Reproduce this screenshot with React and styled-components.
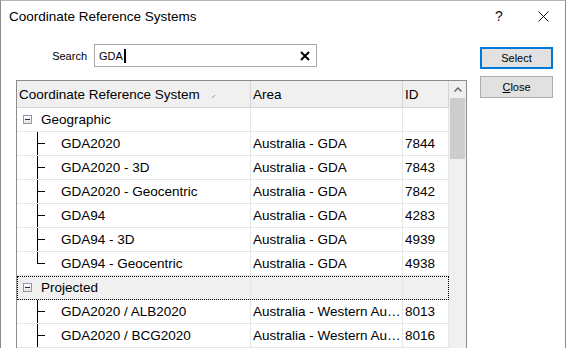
import React from 'react';
import styled, { createGlobalStyle } from 'styled-components';

const Global = createGlobalStyle`
  html, body { margin: 0; padding: 0; background: #fff; overflow: hidden; }
  body { font-family: "Liberation Sans", Arial, sans-serif; color: #000; }
  * { box-sizing: border-box; }
`;

const Window = styled.div`
  width: 566px;
  height: 372px;
  border: 1px solid #8a8a8a;
  border-top-color: #b4b4b4;
  border-bottom: none;
  background: #fff;
  display: flex;
  flex-direction: column;
`;

const TitleBar = styled.div`
  height: 30px;
  flex: none;
  display: flex;
  align-items: center;
  padding-left: 8px;
`;

const Title = styled.div`
  flex: 1;
  font-size: 13.5px;
  color: #000;
`;

const CaptionButton = styled.div`
  width: 44px;
  height: 30px;
  display: flex;
  align-items: center;
  justify-content: center;
  font-size: 14px;
  color: #111;
`;

const Body = styled.div`
  flex: 1;
  display: flex;
  padding: 13px 0 0 15px;
  min-height: 0;
`;

const MainColumn = styled.div`
  width: 451px;
  display: flex;
  flex-direction: column;
  min-height: 0;
`;

const SearchRow = styled.div`
  height: 23px;
  display: flex;
  align-items: center;
`;

const SearchLabel = styled.label`
  width: 71px;
  margin-right: 7px;
  text-align: right;
  font-size: 11px;
  color: #000;
`;

const SearchBox = styled.div`
  width: 223px;
  height: 23px;
  border: 1px solid #a9a9a9;
  display: flex;
  align-items: center;
  padding: 0 6px 0 4px;
  font-size: 11px;
`;

const SearchText = styled.span`
  display: inline-flex;
  align-items: center;
  flex: 1;
`;

const Caret = styled.span`
  display: inline-block;
  width: 2px;
  height: 14px;
  background: #000;
  margin-left: 1px;
`;

const Frame = styled.div`
  margin-top: 13px;
  height: 300px;
  border: 1px solid #8c8c8c;
  display: flex;
  overflow: hidden;
`;

const Grid = styled.div`
  width: 432px;
  display: flex;
  flex-direction: column;
`;

const HeaderRow = styled.div`
  display: grid;
  grid-template-columns: 234px 152px 46px;
  height: 27px;
  background: #f0f0f0;
  border-bottom: 1px solid #d5d5d5;
`;

const HeaderCell = styled.div`
  display: flex;
  align-items: center;
  padding-left: 2px;
  border-right: 1px solid #d5d5d5;
  font-size: 13.5px;
  white-space: nowrap;
`;

const SortMark = styled.svg`
  margin-left: auto;
  margin-right: 35px;
  margin-top: 5px;
`;

const Row = styled.div`
  position: relative;
  display: grid;
  grid-template-columns: 234px 152px 46px;
  height: 24px;
  border-bottom: 1px solid #e6e6e6;
  background: ${p => (p.$focused ? '#f0f0f0' : '#fff')};
`;

const FocusRing = styled.div`
  position: absolute;
  left: 0;
  right: 0;
  top: 0;
  bottom: -1px;
  border: 1px dotted #000;
  pointer-events: none;
`;

const Cell = styled.div`
  display: flex;
  align-items: center;
  padding-left: ${p => p.$pad ?? 2}px;
  border-right: 1px solid #e6e6e6;
  font-size: 13.5px;
  white-space: nowrap;
  overflow: hidden;
  min-width: 0;
`;

const CellText = styled.span`
  overflow: hidden;
  text-overflow: ellipsis;
  white-space: nowrap;
  min-width: 0;
  max-width: 100%;
`;

const ExpandBox = styled.span`
  position: relative;
  flex: none;
  width: 9px;
  height: 9px;
  margin-right: 9px;
  border: 1px solid #8f9aa6;
  background: linear-gradient(#ffffff, #e2e4e8);
  &::after {
    content: '';
    position: absolute;
    left: 1px;
    top: 3px;
    width: 5px;
    height: 1px;
    background: #1e2b4a;
  }
`;

const Branch = styled.span`
  position: relative;
  flex: none;
  align-self: stretch;
  width: 24px;
  margin-left: 20px;
  &::before {
    content: '';
    position: absolute;
    left: 0;
    top: -1px;
    bottom: ${p => (p.$last ? '11px' : '-1px')};
    width: 1px;
    background: #000;
  }
  &::after {
    content: '';
    position: absolute;
    left: 0;
    top: 11px;
    width: 8px;
    height: 1px;
    background: #000;
  }
`;

const ScrollBar = styled.div`
  width: 17px;
  background: #f0f0f0;
  display: flex;
  flex-direction: column;
`;

const ScrollArrow = styled.div`
  height: 17px;
  display: flex;
  align-items: center;
  justify-content: center;
`;

const ScrollThumb = styled.div`
  height: 61px;
  margin: 0 1px;
  background: #cdcdcd;
`;

const SideColumn = styled.div`
  margin-left: 13px;
  padding-top: 3px;
  display: flex;
  flex-direction: column;
  gap: 7px;
`;

const Button = styled.div`
  width: 73px;
  height: 22px;
  display: flex;
  align-items: center;
  justify-content: center;
  background: #e1e1e1;
  border: ${p => (p.$default ? '2px solid #0078d7' : '1px solid #adadad')};
  font-size: 11px;
  color: #000;
`;

const Mnemonic = styled.span`
  text-decoration: underline;
`;

const groups = [
  {
    name: 'Geographic',
    items: [
      ['GDA2020', 'Australia - GDA', '7844'],
      ['GDA2020 - 3D', 'Australia - GDA', '7843'],
      ['GDA2020 - Geocentric', 'Australia - GDA', '7842'],
      ['GDA94', 'Australia - GDA', '4283'],
      ['GDA94 - 3D', 'Australia - GDA', '4939'],
      ['GDA94 - Geocentric', 'Australia - GDA', '4938'],
    ],
  },
  {
    name: 'Projected',
    focused: true,
    open: true,
    items: [
      ['GDA2020 / ALB2020', 'Australia - Western Australia', '8013'],
      ['GDA2020 / BCG2020', 'Australia - Western Australia', '8016'],
    ],
  },
];

export default function App() {
  return (
    <>
      <Global />
      <Window>
        <TitleBar>
          <Title>Coordinate Reference Systems</Title>
          <CaptionButton>?</CaptionButton>
          <CaptionButton>
            <svg width="11" height="11" viewBox="0 0 11 11">
              <path d="M0.5 0.5 L10.5 10.5 M10.5 0.5 L0.5 10.5" stroke="#111" strokeWidth="1" fill="none" />
            </svg>
          </CaptionButton>
        </TitleBar>
        <Body>
          <MainColumn>
            <SearchRow>
              <SearchLabel>Search</SearchLabel>
              <SearchBox>
                <SearchText>
                  GDA
                  <Caret />
                </SearchText>
                <svg width="10" height="10" viewBox="0 0 10 10">
                  <path d="M1 1 L9 9 M9 1 L1 9" stroke="#000" strokeWidth="2" fill="none" />
                </svg>
              </SearchBox>
            </SearchRow>
            <Frame>
              <Grid>
                <HeaderRow>
                  <HeaderCell>
                    Coordinate Reference System
                    <SortMark width="3" height="3" viewBox="0 0 3 3">
                      <path d="M0 3 L3 0" stroke="#9a9a9a" strokeWidth="1" />
                    </SortMark>
                  </HeaderCell>
                  <HeaderCell>Area</HeaderCell>
                  <HeaderCell>ID</HeaderCell>
                </HeaderRow>
                {groups.map(g => (
                  <React.Fragment key={g.name}>
                    <Row $focused={g.focused}>
                      <Cell $pad={6}>
                        <ExpandBox />
                        <CellText>{g.name}</CellText>
                      </Cell>
                      <Cell />
                      <Cell />
                      {g.focused && <FocusRing />}
                    </Row>
                    {g.items.map((it, i) => (
                      <Row key={it[2]}>
                        <Cell $pad={0}>
                          <Branch $last={!g.open && i === g.items.length - 1} />
                          <CellText>{it[0]}</CellText>
                        </Cell>
                        <Cell>
                          <CellText>{it[1]}</CellText>
                        </Cell>
                        <Cell>
                          <CellText>{it[2]}</CellText>
                        </Cell>
                      </Row>
                    ))}
                  </React.Fragment>
                ))}
              </Grid>
              <ScrollBar>
                <ScrollArrow>
                  <svg width="8" height="5" viewBox="0 0 8 5">
                    <path d="M0.5 4.5 L4 1 L7.5 4.5" stroke="#606060" strokeWidth="1.4" fill="none" />
                  </svg>
                </ScrollArrow>
                <ScrollThumb />
              </ScrollBar>
            </Frame>
          </MainColumn>
          <SideColumn>
            <Button $default>Select</Button>
            <Button>
              <Mnemonic>C</Mnemonic>lose
            </Button>
          </SideColumn>
        </Body>
      </Window>
    </>
  );
}
